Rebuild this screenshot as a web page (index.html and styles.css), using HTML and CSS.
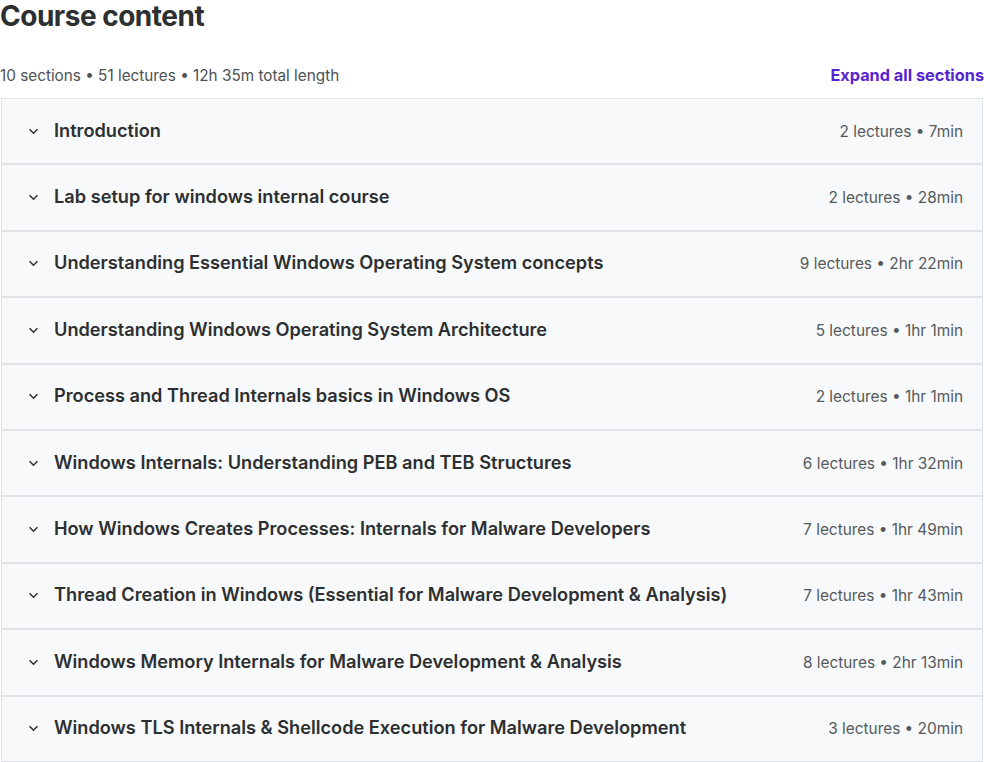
FILE: index.html
```html
<!DOCTYPE html>
<html lang="en">
<head>
    <meta charset="UTF-8">
    <title>Course content</title>
    <link rel="stylesheet" href="styles.css">
</head>
<body>
    <div class="curriculum">
        <h2 class="title">Course content</h2>
        <div class="summary">
            <span class="summary-text">10 sections • 51 lectures • 12h 35m total length</span>
            <button class="expand-all">Expand all sections</button>
        </div>

        <div class="sections">
            <div class="section">
                <span class="chevron"><svg viewBox="0 0 12 8" width="11" height="7"><path d="M1.5 1.5 L6 6 L10.5 1.5" fill="none" stroke="currentColor" stroke-width="1.7"/></svg></span>
                <span class="section-title">Introduction</span>
                <span class="section-meta">2 lectures • 7min</span>
            </div>
            <div class="section">
                <span class="chevron"><svg viewBox="0 0 12 8" width="11" height="7"><path d="M1.5 1.5 L6 6 L10.5 1.5" fill="none" stroke="currentColor" stroke-width="1.7"/></svg></span>
                <span class="section-title">Lab setup for windows internal course</span>
                <span class="section-meta">2 lectures • 28min</span>
            </div>
            <div class="section">
                <span class="chevron"><svg viewBox="0 0 12 8" width="11" height="7"><path d="M1.5 1.5 L6 6 L10.5 1.5" fill="none" stroke="currentColor" stroke-width="1.7"/></svg></span>
                <span class="section-title">Understanding Essential Windows Operating System concepts</span>
                <span class="section-meta">9 lectures • 2hr 22min</span>
            </div>
            <div class="section">
                <span class="chevron"><svg viewBox="0 0 12 8" width="11" height="7"><path d="M1.5 1.5 L6 6 L10.5 1.5" fill="none" stroke="currentColor" stroke-width="1.7"/></svg></span>
                <span class="section-title">Understanding Windows Operating System Architecture</span>
                <span class="section-meta">5 lectures • 1hr 1min</span>
            </div>
            <div class="section">
                <span class="chevron"><svg viewBox="0 0 12 8" width="11" height="7"><path d="M1.5 1.5 L6 6 L10.5 1.5" fill="none" stroke="currentColor" stroke-width="1.7"/></svg></span>
                <span class="section-title">Process and Thread Internals basics in Windows OS</span>
                <span class="section-meta">2 lectures • 1hr 1min</span>
            </div>
            <div class="section">
                <span class="chevron"><svg viewBox="0 0 12 8" width="11" height="7"><path d="M1.5 1.5 L6 6 L10.5 1.5" fill="none" stroke="currentColor" stroke-width="1.7"/></svg></span>
                <span class="section-title">Windows Internals: Understanding PEB and TEB Structures</span>
                <span class="section-meta">6 lectures • 1hr 32min</span>
            </div>
            <div class="section">
                <span class="chevron"><svg viewBox="0 0 12 8" width="11" height="7"><path d="M1.5 1.5 L6 6 L10.5 1.5" fill="none" stroke="currentColor" stroke-width="1.7"/></svg></span>
                <span class="section-title">How Windows Creates Processes: Internals for Malware Developers</span>
                <span class="section-meta">7 lectures • 1hr 49min</span>
            </div>
            <div class="section">
                <span class="chevron"><svg viewBox="0 0 12 8" width="11" height="7"><path d="M1.5 1.5 L6 6 L10.5 1.5" fill="none" stroke="currentColor" stroke-width="1.7"/></svg></span>
                <span class="section-title">Thread Creation in Windows (Essential for Malware Development &amp; Analysis)</span>
                <span class="section-meta">7 lectures • 1hr 43min</span>
            </div>
            <div class="section">
                <span class="chevron"><svg viewBox="0 0 12 8" width="11" height="7"><path d="M1.5 1.5 L6 6 L10.5 1.5" fill="none" stroke="currentColor" stroke-width="1.7"/></svg></span>
                <span class="section-title">Windows Memory Internals for Malware Development &amp; Analysis</span>
                <span class="section-meta">8 lectures • 2hr 13min</span>
            </div>
            <div class="section">
                <span class="chevron"><svg viewBox="0 0 12 8" width="11" height="7"><path d="M1.5 1.5 L6 6 L10.5 1.5" fill="none" stroke="currentColor" stroke-width="1.7"/></svg></span>
                <span class="section-title">Windows TLS Internals &amp; Shellcode Execution for Malware Development</span>
                <span class="section-meta">3 lectures • 20min</span>
            </div>
        </div>
    </div>
</body>
</html>
```

FILE: styles.css
```css
body, html {
    margin: 0;
    padding: 0;
    background-color: #fff;
    color: #2d2f31;
    font-family: 'Inter', 'Liberation Sans', sans-serif;
}
.curriculum {
    width: 984px;
}
.title {
    margin: 0;
    font-size: 28px;
    font-weight: 700;
    line-height: 32px;
    letter-spacing: -0.5px;
}
.summary {
    display: flex;
    justify-content: space-between;
    align-items: center;
    margin-top: 32px;
    margin-bottom: 12px;
    height: 22px;
}
.summary-text {
    font-size: 15.3px;
    color: #4d5154;
}
.expand-all {
    font-family: inherit;
    font-size: 16.3px;
    font-weight: 700;
    color: #5624d0;
    background: none;
    border: none;
    padding: 0;
    cursor: pointer;
}
.sections {
    margin-left: 1px;
    margin-right: 1px;
    border: 1px solid #e2e5e8;
    border-bottom: none;
}
.section {
    display: flex;
    align-items: center;
    height: 64.4px;
    padding: 0 19px 0 26px;
    background-color: #f7f9fa;
    border-bottom: 2px solid #e2e5e8;
}
.chevron {
    display: flex;
    width: 12px;
    margin-right: 14px;
    color: #2d2f31;
}
.section-title {
    flex: 1;
    font-size: 18.2px;
    font-weight: 600;
    color: #2d2f31;
    margin-top: -3px;
}
.section-meta {
    font-size: 15.4px;
    color: #55595c;
}
```
